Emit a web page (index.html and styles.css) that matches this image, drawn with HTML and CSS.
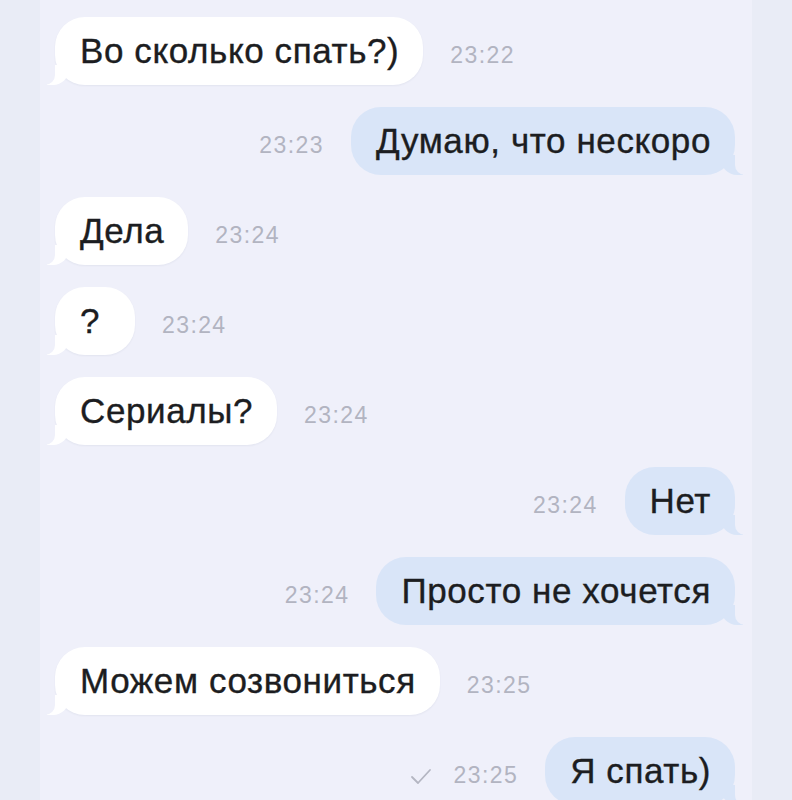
FILE: index.html
```html
<!DOCTYPE html>
<html lang="ru">
  <head>
    <meta charset="UTF-8">
    <meta name="viewport" content="width=device-width, initial-scale=1.0">
    <title>Чат</title>
    <link rel="stylesheet" href="styles.css">
  </head>
  <body>
    <div class="chat">
      <div class="row in">
        <div class="bubble">Во сколько спать?)</div>
        <span class="time">23:22</span>
      </div>
      <div class="row out">
        <span class="time">23:23</span>
        <div class="bubble">Думаю, что нескоро</div>
      </div>
      <div class="row in">
        <div class="bubble">Дела</div>
        <span class="time">23:24</span>
      </div>
      <div class="row in">
        <div class="bubble bubble-short">?</div>
        <span class="time">23:24</span>
      </div>
      <div class="row in">
        <div class="bubble">Сериалы?</div>
        <span class="time">23:24</span>
      </div>
      <div class="row out">
        <span class="time">23:24</span>
        <div class="bubble">Нет</div>
      </div>
      <div class="row out">
        <span class="time">23:24</span>
        <div class="bubble">Просто не хочется</div>
      </div>
      <div class="row in">
        <div class="bubble">Можем созвониться</div>
        <span class="time">23:25</span>
      </div>
      <div class="row out">
        <span class="time">
          <svg class="check" width="22" height="18" viewBox="0 0 22 18">
            <path d="M2 10 L8 16 L20 3" fill="none" stroke="#b4b6c2" stroke-width="1.8" stroke-linecap="round" stroke-linejoin="round"/>
          </svg>
          23:25
        </span>
        <div class="bubble">Я спать)</div>
      </div>
    </div>
  </body>
</html>
```

FILE: styles.css
```css
* {
  box-sizing: border-box;
  margin: 0;
  padding: 0;
}

html, body {
  height: 100%;
  overflow: hidden;
}

body {
  background-color: #e9ecf6;
  font-family: "Liberation Sans", Arial, sans-serif;
}

.chat {
  width: 712px;
  height: 100%;
  margin-left: 40px;
  padding: 17px 17px 0 15px;
  background-color: #eff0fa;
  display: flex;
  flex-direction: column;
  gap: 22px;
}

.row {
  display: flex;
  align-items: flex-end;
  gap: 27px;
}

.row.out {
  justify-content: flex-end;
}

.bubble {
  position: relative;
  height: 68px;
  padding: 0 24px 0 25px;
  display: flex;
  align-items: center;
  border-radius: 30px;
  font-size: 35px;
  letter-spacing: 0.6px;
  color: #1c1d21;
  -webkit-text-stroke: 0.35px #1c1d21;
  white-space: nowrap;
}

.bubble-short {
  min-width: 80px;
}

.in .bubble {
  background-color: #ffffff;
  box-shadow: 0 1px 2px rgba(40, 50, 90, 0.06);
}

.out .bubble {
  background-color: #d9e5f8;
}

/* хвостики пузырей */
.bubble::before, .bubble::after {
  content: "";
  position: absolute;
  bottom: 0;
  height: 20px;
}

.in .bubble::before {
  left: -8px;
  width: 22px;
  background-color: #ffffff;
  border-bottom-right-radius: 16px;
}

.in .bubble::after {
  left: -12px;
  width: 12px;
  background-color: #eff0fa;
  border-bottom-right-radius: 10px;
}

.out .bubble::before {
  right: -8px;
  width: 22px;
  background-color: #d9e5f8;
  border-bottom-left-radius: 16px;
}

.out .bubble::after {
  right: -12px;
  width: 12px;
  background-color: #eff0fa;
  border-bottom-left-radius: 10px;
}

.time {
  display: flex;
  align-items: center;
  gap: 22px;
  margin-bottom: 18px;
  font-size: 23px;
  line-height: 1;
  letter-spacing: 1.4px;
  color: #b2b4c1;
}

.check {
  display: block;
}
```
